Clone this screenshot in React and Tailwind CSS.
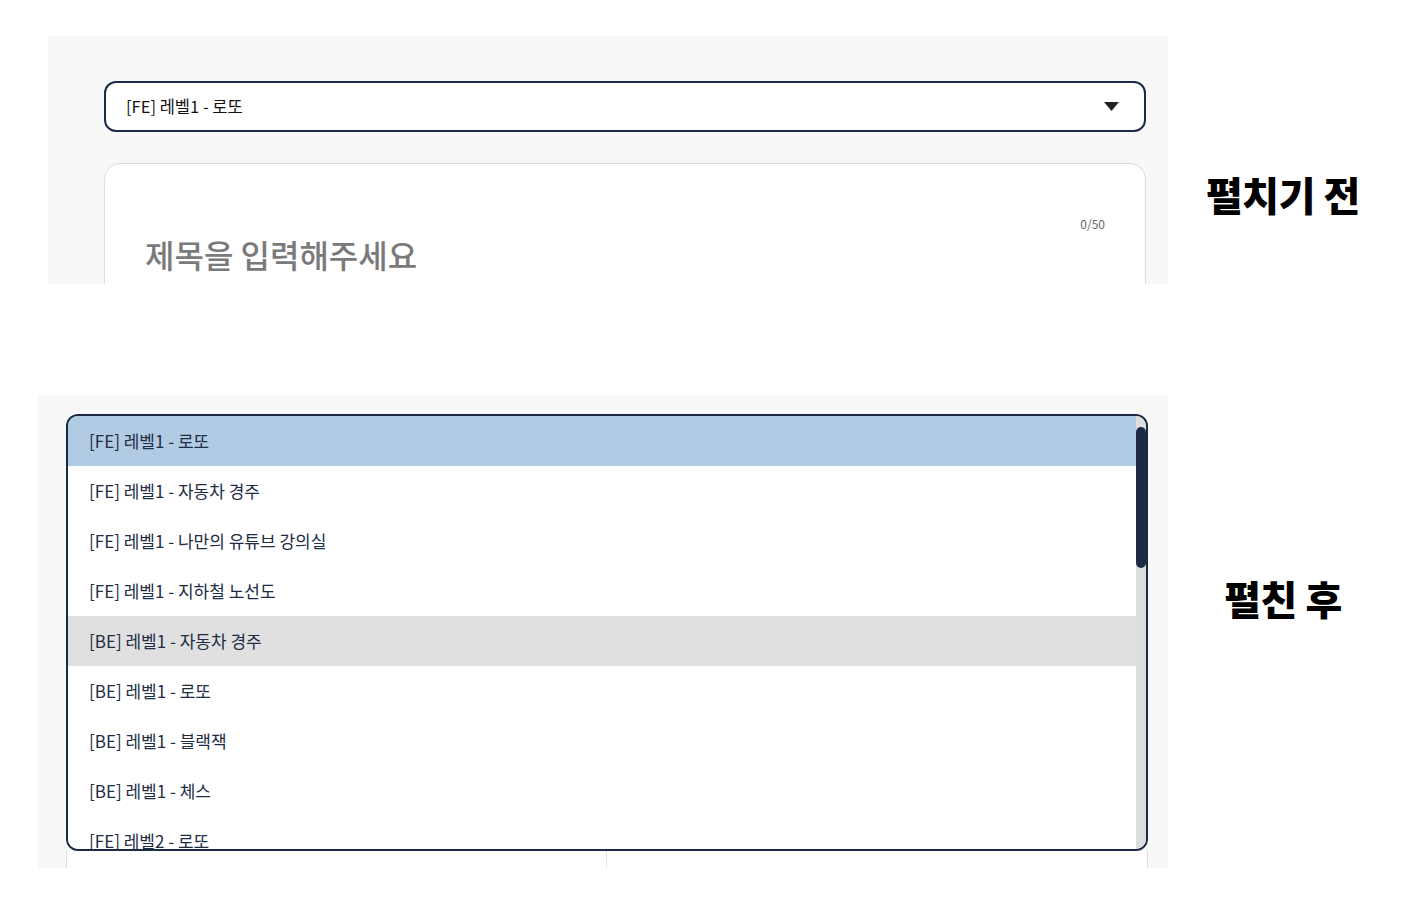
import React from 'react';

const options = [
    '[FE] 레벨1 - 로또',
    '[FE] 레벨1 - 자동차 경주',
    '[FE] 레벨1 - 나만의 유튜브 강의실',
    '[FE] 레벨1 - 지하철 노선도',
    '[BE] 레벨1 - 자동차 경주',
    '[BE] 레벨1 - 로또',
    '[BE] 레벨1 - 블랙잭',
    '[BE] 레벨1 - 체스',
    '[FE] 레벨2 - 로또',
];

const font = { fontFamily: '"Noto Sans CJK KR", "Noto Sans", sans-serif' };

export default function App() {
    const selected = 0;
    const hovered = 4;

    return (
        <div className="w-[1402px] h-[910px] bg-white text-[#1c2b44]" style={font}>
            {/* Before: closed select */}
            <div className="flex pl-[48px] pt-[36px]">
                <div className="w-[1120px] h-[248px] bg-[#f8f8f8] overflow-hidden pt-[45px] pl-[56px]">
                    <div className="w-[1042px] h-[51px] rounded-[12px] border-2 border-[#1c2b44] bg-white flex items-center justify-between pl-[20px] pr-[25px]">
                        <span className="text-[16.5px] text-[#111]">[FE] 레벨1 - 로또</span>
                        <svg width="15" height="9" viewBox="0 0 15 9">
                            <path d="M0 0 L15 0 L7.5 9 Z" fill="#222" />
                        </svg>
                    </div>
                    <div className="mt-[31px] w-[1042px] h-[200px] rounded-t-[16px] border border-[#dcdcdc] bg-white pt-[51px] px-[40px]">
                        <div className="flex justify-end">
                            <span className="text-[12px] text-[#666]">0/50</span>
                        </div>
                        <div className="mt-[1px] text-[32px] font-medium text-[#7a7a7a] leading-tight">제목을 입력해주세요</div>
                    </div>
                </div>
                <div className="flex-1 flex justify-center pt-[133px] pr-[4px]">
                    <span className="text-[40px] font-black text-black tracking-[-0.5px] leading-tight">펼치기 전</span>
                </div>
            </div>

            {/* After: opened listbox */}
            <div className="flex pl-[38px] mt-[111px]">
                <div className="w-[1130px] h-[473px] bg-[#f8f8f8] overflow-hidden pt-[19px] pl-[28px]">
                    <div className="w-[1082px] h-[437px] rounded-[12px] border-2 border-[#1c2b44] bg-white overflow-hidden flex">
                        <ul className="flex-1 overflow-hidden">
                            {options.map((opt, i) => (
                                <li
                                    key={opt}
                                    className={
                                        'h-[50px] shrink-0 flex items-center pl-[21px] text-[17px] text-[#1e2d44] ' +
                                        (i === selected ? 'bg-[#b0cbe3]' : i === hovered ? 'bg-[#e0e0e0]' : 'bg-white')
                                    }
                                >
                                    {opt}
                                </li>
                            ))}
                        </ul>
                        <div className="w-[10px] bg-[#dedede] pt-[11px]">
                            <div className="h-[141px] rounded-full bg-[#1c2b44]"></div>
                        </div>
                    </div>
                    <div className="w-[1082px] h-[20px] bg-white border-x border-[#dcdcdc] flex">
                        <div className="w-[540px] border-r border-[#e6e6e6]"></div>
                    </div>
                </div>
                <div className="flex-1 flex justify-center pt-[178px] pr-[4px]">
                    <span className="text-[40px] font-black text-black tracking-[-0.5px] leading-tight">펼친 후</span>
                </div>
            </div>
        </div>
    );
}
